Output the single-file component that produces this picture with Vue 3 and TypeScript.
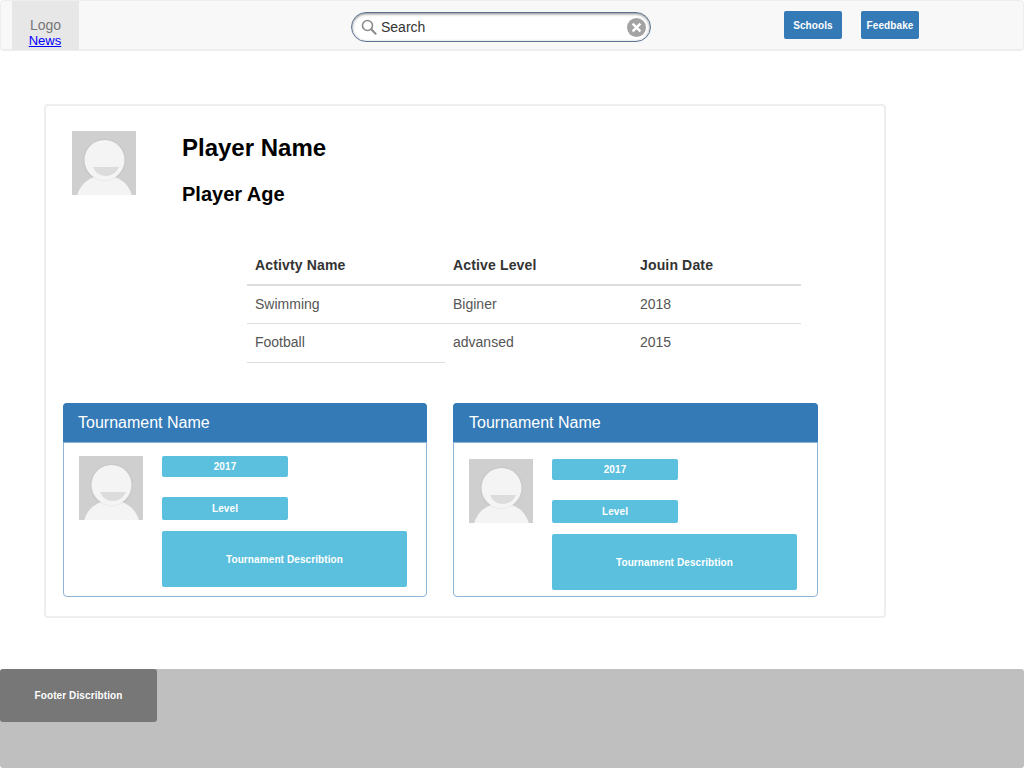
<script setup lang="ts">
const activities = [
  { name: 'Swimming', level: 'Biginer', date: '2018' },
  { name: 'Football', level: 'advansed', date: '2015' },
]

const tournaments = [
  { id: 1, year: '2017', shifted: false },
  { id: 2, year: '2017', shifted: true },
]
</script>

<template>
  <div class="page">
    <nav class="navbar">
      <div class="brand">
        <span class="logo">Logo</span>
        <a class="newsLink" href="#">News</a>
      </div>
      <div class="search">
        <svg class="searchIcon" width="16" height="16" viewBox="0 0 16 16">
          <circle cx="6.5" cy="6.5" r="5" fill="none" stroke="#8a8a8a" stroke-width="1.6" />
          <path d="M10.2 10.2 L14.6 14.8" stroke="#8a8a8a" stroke-width="2" stroke-linecap="round" />
        </svg>
        <span class="searchText">Search</span>
        <svg class="clearIcon" width="19" height="19" viewBox="0 0 19 19">
          <circle cx="9.5" cy="9.5" r="9.5" fill="#a3a3a3" />
          <path d="M5.6 5.6 L13.4 13.4 M13.4 5.6 L5.6 13.4" stroke="#fff" stroke-width="2.4" />
        </svg>
      </div>
      <button class="navButton first">Schools</button>
      <button class="navButton">Feedbake</button>
    </nav>

    <main class="profile">
      <div class="playerRow">
        <svg class="avatar" width="64" height="64" viewBox="0 0 64 64">
          <rect width="64" height="64" fill="#cfcfcf" />
          <ellipse cx="32.5" cy="70" rx="28" ry="26" fill="#f4f4f4" />
          <circle cx="32.5" cy="29" r="21.5" fill="#000" opacity="0.03" />
          <circle cx="32.5" cy="29" r="20" fill="#f4f4f4" />
          <path d="M21 36 H47 C44.5 42 39 45 34 45 C28 45 23.5 42 21 36 Z" fill="#dcdcdc" />
        </svg>
        <div class="playerInfo">
          <h1 class="playerName">Player Name</h1>
          <h2 class="playerAge">Player Age</h2>
        </div>
      </div>

      <table class="activityTable">
        <thead>
          <tr>
            <th class="colName">Activty Name</th>
            <th class="colLevel">Active Level</th>
            <th class="colDate">Jouin Date</th>
          </tr>
        </thead>
        <tbody>
          <tr v-for="activity in activities" :key="activity.name">
            <td>{{ activity.name }}</td>
            <td>{{ activity.level }}</td>
            <td>{{ activity.date }}</td>
          </tr>
        </tbody>
      </table>

      <div class="tournaments">
        <section v-for="t in tournaments" :key="t.id" class="tournament">
          <header class="tournamentHead">Tournament Name</header>
          <div class="tournamentBody" :class="{ shifted: t.shifted }">
            <svg class="avatar" width="64" height="64" viewBox="0 0 64 64">
              <rect width="64" height="64" fill="#cfcfcf" />
              <ellipse cx="32.5" cy="70" rx="28" ry="26" fill="#f4f4f4" />
              <circle cx="32.5" cy="29" r="21.5" fill="#000" opacity="0.03" />
              <circle cx="32.5" cy="29" r="20" fill="#f4f4f4" />
              <path d="M21 36 H47 C44.5 42 39 45 34 45 C28 45 23.5 42 21 36 Z" fill="#dcdcdc" />
            </svg>
            <div class="tournamentInfo">
              <div class="badge yearBadge">{{ t.year }}</div>
              <div class="badge levelBadge">Level</div>
              <div class="badge descBadge">Tournament Describtion</div>
            </div>
          </div>
        </section>
      </div>
    </main>

    <footer class="footer">
      <div class="footerText">Footer Discribtion</div>
    </footer>
  </div>
</template>

<style>
html,
body {
  margin: 0;
  background: #fff;
}
</style>

<style scoped>
.page {
  width: 1024px;
  height: 769px;
  overflow: hidden;
  font-family: "Liberation Sans", Arial, sans-serif;
  font-size: 14px;
  color: #333;
}

.navbar {
  box-sizing: border-box;
  height: 51px;
  display: flex;
  align-items: flex-start;
  padding-left: 11px;
  background: #f8f8f8;
  border: 1px solid #eeeeee;
  border-bottom-width: 2px;
  border-radius: 4px;
}

.brand {
  width: 67px;
  height: 49px;
  display: flex;
  flex-direction: column;
  background: #e7e7e7;
  text-align: center;
  line-height: 15px;
}

.logo {
  margin-top: 17px;
  color: #777;
}

.newsLink {
  margin-right: 1px;
  font-size: 13px;
  line-height: 16px;
  color: #0000ff;
}

.search {
  box-sizing: border-box;
  width: 300px;
  height: 30px;
  margin: 11px 133px 0 272px;
  display: flex;
  align-items: center;
  padding: 0 4px 0 9px;
  background: #fff;
  border: 1px solid #5d7391;
  border-radius: 15px;
  box-shadow: inset 0 1px 3px rgba(0, 0, 0, 0.5);
}

.searchText {
  flex: 1;
  margin-left: 4px;
  color: #333;
}

.navButton {
  width: 58px;
  height: 28px;
  margin-top: 10px;
  margin-left: 19px;
  padding: 0;
  border: 0;
  border-radius: 2px;
  background: #337ab7;
  color: #fff;
  font-family: inherit;
  font-size: 10px;
  font-weight: bold;
  letter-spacing: 0.1px;
}

.navButton.first {
  margin-left: 0;
}

.profile {
  box-sizing: border-box;
  width: 842px;
  height: 514px;
  margin: 53px 0 0 44px;
  padding: 25px 17px 0;
  background: #fff;
  border: 2px solid #eeeeee;
  border-radius: 4px;
}

.playerRow {
  display: flex;
  padding-left: 9px;
}

.avatar {
  display: block;
  flex: none;
}

.playerInfo {
  margin-left: 46px;
}

.playerName {
  margin: 3px 0 0;
  font-size: 24px;
  line-height: 28px;
  color: #000;
}

.playerAge {
  margin: 20px 0 0;
  font-size: 20px;
  line-height: 24px;
  color: #000;
}

.activityTable {
  width: 554px;
  margin: 40px 0 0 184px;
  border-collapse: collapse;
  table-layout: fixed;
}

.activityTable th,
.activityTable td {
  padding: 0 8px;
  text-align: left;
}

.activityTable th {
  height: 38px;
  border-bottom: 2px solid #dddddd;
  color: #333;
  letter-spacing: 0.15px;
}

.activityTable td {
  height: 35px;
  padding-bottom: 2px;
  border-bottom: 1px solid #dddddd;
  color: #555;
}

.activityTable tbody tr:last-child td {
  height: 36px;
}

.activityTable tbody tr:last-child td:not(:first-child) {
  border-bottom-color: transparent;
}

.colName {
  width: 182px;
}

.colLevel {
  width: 171px;
}

.tournaments {
  display: flex;
  gap: 26px;
  margin-top: 40px;
}

.tournament {
  box-sizing: border-box;
  width: 364px;
  height: 194px;
  background: #fff;
  border: 1px solid #8eb3d5;
  border-radius: 4px;
}

.tournament:last-child {
  width: 365px;
}

.tournamentHead {
  box-sizing: border-box;
  height: 40px;
  margin: -1px -1px 0;
  padding-left: 15px;
  background: #337ab7;
  border-bottom: 1px solid #8eb3d5;
  border-radius: 4px 4px 0 0;
  color: #fff;
  font-size: 16px;
  line-height: 39px;
}

.tournament:last-child .tournamentHead {
  padding-left: 16px;
}

.tournamentBody {
  display: flex;
  padding: 13px 0 0 15px;
}

.tournamentBody.shifted {
  padding-top: 16px;
}

.tournamentInfo {
  margin-left: 19px;
  display: flex;
  flex-direction: column;
  align-items: flex-start;
}

.badge {
  display: flex;
  align-items: center;
  justify-content: center;
  border-radius: 2px;
  background: #5bc0de;
  color: #fff;
  font-size: 10px;
  font-weight: bold;
  letter-spacing: 0.1px;
}

.yearBadge {
  width: 126px;
  height: 21px;
}

.levelBadge {
  width: 126px;
  height: 23px;
  margin-top: 20px;
}

.descBadge {
  width: 245px;
  height: 56px;
  margin-top: 11px;
}

.footer {
  height: 99px;
  margin-top: 51px;
  background: #bfbfbf;
  border-radius: 3px;
}

.footerText {
  width: 157px;
  height: 53px;
  display: flex;
  align-items: center;
  justify-content: center;
  border-radius: 3px;
  background: #777777;
  color: #fff;
  font-size: 10px;
  font-weight: bold;
  letter-spacing: 0.1px;
}
</style>
